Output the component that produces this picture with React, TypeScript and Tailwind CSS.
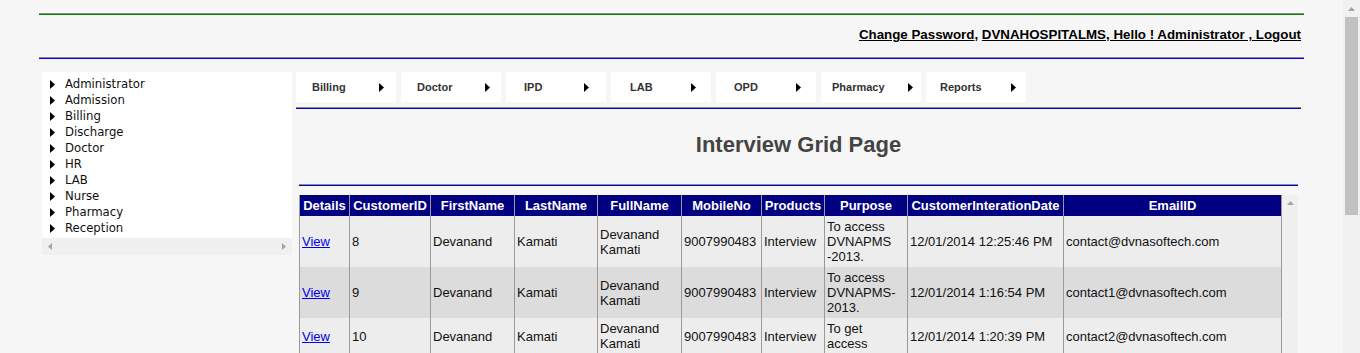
import React from "react";

const tree = ["Administrator", "Admission", "Billing", "Discharge", "Doctor", "HR", "LAB", "Nurse", "Pharmacy", "Reception"];

// spacing differs per item in the original menu
const menu = [
  { label: "Billing", cls: "pl-[16px] pr-[12px]" },
  { label: "Doctor", cls: "pl-[16px] pr-[11px]" },
  { label: "IPD", cls: "pl-[18px] pr-[17px]" },
  { label: "LAB", cls: "pl-[19px] pr-[15px]" },
  { label: "OPD", cls: "pl-[18px] pr-[15px]" },
  { label: "Pharmacy", cls: "pl-[11px] pr-[8px]" },
  { label: "Reports", cls: "pl-[14px] pr-[10px]" },
];

const cols = [
  { label: "Details", w: 50 },
  { label: "CustomerID", w: 81 },
  { label: "FirstName", w: 84 },
  { label: "LastName", w: 83 },
  { label: "FullName", w: 84 },
  { label: "MobileNo", w: 80 },
  { label: "Products", w: 63 },
  { label: "Purpose", w: 83 },
  { label: "CustomerInterationDate", w: 156 },
  { label: "EmailID", w: 218 },
];

const rows = [
  { id: "8", purpose: "To access DVNAPMS -2013.", date: "12/01/2014 12:25:46 PM", email: "contact@dvnasoftech.com" },
  { id: "9", purpose: "To access DVNAPMS-2013.", date: "12/01/2014 1:16:54 PM", email: "contact1@dvnasoftech.com" },
  { id: "10", purpose: "To get access", date: "12/01/2014 1:20:39 PM", email: "contact2@dvnasoftech.com" },
];

const Arrow = ({ className = "" }: { className?: string }) => (
  <svg width="5" height="9" viewBox="0 0 5 9" className={className}>
    <polygon points="0,0 5,4.5 0,9" fill="#000" />
  </svg>
);

const Rule = ({ color }: { color: string }) => (
  <div className="flex flex-col">
    <div className="h-px bg-[#8c8c8c]" />
    <div className="h-px" style={{ background: color }} />
  </div>
);

const td = "border-x border-[#9a9a9a] px-[2px] py-[3px] align-middle leading-[15px]";

const App = () => {
  return (
    <div className="flex h-[353px] w-[1360px] overflow-hidden bg-[#f6f6f6] font-['Liberation_Sans',Arial,sans-serif]">
      <div className="flex-1 overflow-hidden">
        <div className="mx-auto w-[1265px]">
          <div className="h-[13px]" />
          <Rule color="#008000" />
          <div className="flex h-[42px] justify-end pt-[12px] pr-[3px] text-[13.33px] font-bold leading-[16px] text-black">
            <a className="underline">Change Password</a>
            <span>,&nbsp;</span>
            <a className="underline">DVNAHOSPITALMS, Hello ! Administrator , Logout</a>
          </div>
          <Rule color="#0000ff" />

          <div className="mt-[13px] flex">
            <aside className="ml-[3px] flex h-[183px] w-[250px] flex-col bg-white pt-[4px]">
              <ul className="flex-1 font-['DejaVu_Sans_Condensed','DejaVu_Sans',sans-serif] text-[13px] leading-[16px] text-[#111]">
                {tree.map((t) => (
                  <li key={t} className="flex h-[16px] items-center">
                    <Arrow className="ml-[8px] mr-[10px]" />
                    <span>{t}</span>
                  </li>
                ))}
              </ul>
              <div className="flex h-[17px] items-center justify-between bg-[#f0f0f0] px-[6px]">
                <svg width="4" height="7" viewBox="0 0 4 7">
                  <polygon points="4,0 0,3.5 4,7" fill="#a3a3a3" />
                </svg>
                <svg width="4" height="7" viewBox="0 0 4 7">
                  <polygon points="0,0 4,3.5 0,7" fill="#a3a3a3" />
                </svg>
              </div>
            </aside>

            <main className="ml-[4px] w-[1005px]">
              <nav className="flex gap-[5px]">
                {menu.map((m) => (
                  <div key={m.label} className={`flex h-[30px] w-[100px] items-center bg-white text-[11px] font-bold text-[#333] ${m.cls}`}>
                    <span>{m.label}</span>
                    <Arrow className="ml-auto" />
                  </div>
                ))}
              </nav>
              <div className="mt-[5px]">
                <Rule color="#0000cc" />
              </div>

              <div className="h-[75px] pt-[24px] text-center text-[22px] font-bold leading-[24px] text-[#444]">
                Interview Grid Page
              </div>

              <div className="px-[3px]">
                <Rule color="#0000cc" />
                <div className="mt-[9px] flex items-start">
                  <table className="w-[983px] table-fixed border-collapse text-[13px] text-[#111]">
                    <colgroup>
                      {cols.map((c) => (
                        <col key={c.label} style={{ width: c.w }} />
                      ))}
                    </colgroup>
                    <thead>
                      <tr className="h-[21px] bg-[#000080] text-white">
                        {cols.map((c) => (
                          <th key={c.label} className="border-x border-[#9a9a9a] px-[2px] text-center font-bold leading-[16px] whitespace-nowrap">
                            {c.label}
                          </th>
                        ))}
                      </tr>
                    </thead>
                    <tbody>
                      {rows.map((r, i) => (
                        <tr key={r.id} className={i % 2 === 1 ? "bg-[#dcdcdc]" : "bg-[#ededed]"}>
                          <td className={td}>
                            <a className="text-[#0000ee] underline">View</a>
                          </td>
                          <td className={td}>{r.id}</td>
                          <td className={td}>Devanand</td>
                          <td className={td}>Kamati</td>
                          <td className={td}>Devanand Kamati</td>
                          <td className={td}>9007990483</td>
                          <td className={td}>Interview</td>
                          <td className={td}>{r.purpose}</td>
                          <td className={td}>{r.date}</td>
                          <td className={td}>{r.email}</td>
                        </tr>
                      ))}
                    </tbody>
                  </table>
                  <div className="flex h-[170px] w-[16px] justify-center bg-[#f0f0f0] pt-[6px]">
                    <svg width="7" height="4" viewBox="0 0 7 4">
                      <polygon points="0,4 3.5,0 7,4" fill="#a3a3a3" />
                    </svg>
                  </div>
                </div>
              </div>
            </main>
          </div>
        </div>
      </div>

      <div className="flex w-[17px] flex-col items-center bg-[#f1f1f1]">
        <div className="flex h-[17px] items-center">
          <svg width="7" height="4" viewBox="0 0 7 4">
            <polygon points="0,4 3.5,0 7,4" fill="#a3a3a3" />
          </svg>
        </div>
        <div className="h-[198px] w-[13px] bg-[#c1c1c1]" />
      </div>
    </div>
  );
};

export default App;
